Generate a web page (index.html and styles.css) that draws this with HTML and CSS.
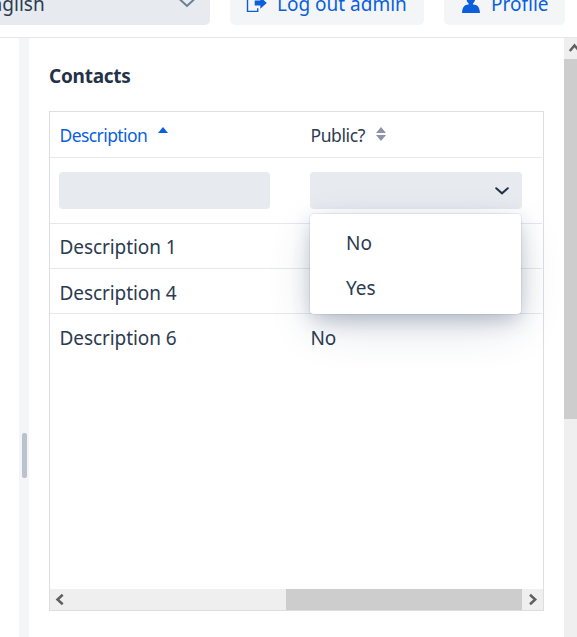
FILE: index.html
```html
<!DOCTYPE html>
<html lang="en">
<head>
<meta charset="utf-8">
<title>Contacts</title>
<link rel="stylesheet" href="styles.css">
</head>
<body>
<header class="toolbar">
  <div class="language"><span class="language-text">English</span>
    <svg class="language-arrow" width="16" height="10" viewBox="0 0 16 10"><path d="M1 1.5 8 8 15 1.5" fill="none" stroke="#6b7f96" stroke-width="2"/></svg>
  </div>
  <button class="button logout">
    <svg width="21" height="20" viewBox="0 0 21 20"><path d="M11.500 1.500H1.500V17.400H11.700V14.200" fill="none" stroke="#0b5fdc" stroke-width="1.400"/><path d="M8.700 6.500H14.300V3L20.800 9 14.300 14.800V11.500H8.700Z" fill="#0b5fdc"/></svg>
    <span class="button-text">Log out admin</span>
  </button>
  <button class="button profile">
    <svg width="20" height="20" viewBox="0 0 20 20"><path d="M6.300 4a4.500 4.500 0 0 1 9 0c0 2-.8 4.200-2.300 5.600V10.600C17.500 11 19.500 12.500 20 19H2c.5-6.500 2.500-8 6.600-8.400V9.600C7.100 8.200 6.300 6 6.300 4Z" fill="#0b5fdc"/></svg>
    <span class="button-text">Profile</span>
  </button>
</header>
<div class="workspace">
  <div class="side"></div>
  <div class="splitter"><div class="handle"></div></div>
  <main class="content">
    <h1 class="title">Contacts</h1>
    <section class="grid">
      <div class="row head">
        <div class="cell sorted"><span class="label-description">Description</span>
          <svg class="sort-asc" width="10" height="6" viewBox="0 0 10 6"><path d="M0 6 5 0 10 6Z" fill="#0b5fdc"/></svg>
        </div>
        <div class="cell"><span class="label-public">Public?</span>
          <svg class="sort-none" width="10" height="14" viewBox="0 0 10 14"><path d="M0 6 5 0 10 6ZM0 8H10L5 14Z" fill="#8b95a7"/></svg>
        </div>
      </div>
      <div class="row filters">
        <div class="cell"><div class="field"></div></div>
        <div class="cell">
          <div class="field combo">
            <svg width="14" height="8" viewBox="0 0 14 8"><path d="M1.200 1.200 7 6.300 12.800 1.200" fill="none" stroke="#243247" stroke-width="2" stroke-linecap="round"/></svg>
            <div class="menu">
              <div class="option">No</div>
              <div class="option">Yes</div>
            </div>
          </div>
        </div>
      </div>
      <div class="row item"><div class="cell">Description 1</div><div class="cell"></div></div>
      <div class="row item middle"><div class="cell">Description 4</div><div class="cell"></div></div>
      <div class="row item last"><div class="cell">Description 6</div><div class="cell">No</div></div>
      <div class="hscroll">
        <svg width="20" height="21" viewBox="0 0 20 21"><path d="M12.700 5.800 7.500 10.500 12.700 15.200" fill="none" stroke="#606060" stroke-width="2.500"/></svg>
        <div class="hthumb"></div>
        <svg width="21" height="21" viewBox="0 0 21 21"><path d="M8 5.800 13.200 10.500 8 15.200" fill="none" stroke="#606060" stroke-width="2.500"/></svg>
      </div>
    </section>
  </main>
  <div class="vscroll">
    <svg width="21" height="21" viewBox="0 0 21 21"><path d="M5.800 13 10.500 7.500 15.200 13" fill="none" stroke="#606060" stroke-width="2.500"/></svg>
    <div class="vthumb"></div>
  </div>
</div>
</body>
</html>
```
FILE: styles.css
```css
* { box-sizing: border-box; }

body {
  margin: 0;
  width: 577px;
  height: 637px;
  display: flex;
  flex-direction: column;
  overflow: hidden;
  background: #fff;
  color: #2c3b50;
  font: 19px/28px "Noto Sans", "Open Sans", sans-serif;
}

svg { display: block; flex: none; }

.toolbar {
  flex: none;
  height: 38px;
  padding-bottom: 12px;
  display: flex;
  align-items: flex-end;
  gap: 20px;
  overflow: hidden;
  border-bottom: 1px solid #e4e6e9;
}

.language {
  flex: none;
  width: 230px;
  margin-left: -20px;
  height: 45px;
  padding-right: 15px;
  display: flex;
  align-items: center;
  justify-content: space-between;
  border-radius: 5px;
  background: #e7eaef;
}

.language-text { margin: 2px 0 0 0; }
.language-arrow { margin-top: 1px; }

.button {
  flex: none;
  height: 45px;
  padding: 0 0 0 16px;
  display: flex;
  align-items: center;
  border: 0;
  border-radius: 5px;
  background: #f3f5f7;
  color: #0b5fdc;
  font: inherit;
  white-space: nowrap;
}

.button svg { margin-top: 3px; }
.button-text { margin: 2px 0 0 11px; }
.logout { width: 194px; }
.logout .button-text { margin-left: 10px; }
.profile { width: 121px; }

.workspace { flex: 1; display: flex; min-height: 0; }
.side { flex: none; width: 19px; }

.splitter {
  flex: none;
  width: 10px;
  padding: 395px 0 0 3px;
  background: #f3f5f7;
}

.handle { width: 5px; height: 45px; border-radius: 2px; background: #bac2cd; }

.content {
  flex: 1;
  min-width: 0;
  padding: 24px 20px 26px;
  display: flex;
  flex-direction: column;
}

.title {
  margin: 0 0 21px;
  font-size: 19px;
  line-height: 28px;
  font-weight: 700;
  letter-spacing: -0.25px;
  color: #243247;
}

.grid {
  flex: 1;
  display: flex;
  flex-direction: column;
  border: 1px solid #dcdee1;
}

.row {
  flex: none;
  height: 45px;
  margin-right: 1px;
  display: grid;
  grid-template-columns: 251px 1fr;
  border-bottom: 1px solid #e7e8ea;
}

.cell { padding-left: 9px; display: flex; align-items: center; white-space: nowrap; }
.item { padding-top: 2px; }
.item .cell { padding-left: 9.5px; letter-spacing: -0.08px; }
.middle { padding-top: 4px; }
.head { height: 46px; padding-top: 1px; font-size: 17.5px; }
.head .cell { padding-left: 9.5px; }
.sorted { color: #0b5fdc; }
.label-description { width: 87.5px; letter-spacing: -0.58px; }
.label-public { width: 55px; letter-spacing: -0.4px; }
.sort-asc { margin: 0 0 11px 10.5px; }
.sort-none { margin: 0 0 3px 10.5px; }
.filters { height: 66px; }
.last { border-bottom: 0; }

.field { width: 211px; height: 37px; border-radius: 4px; background: #e7eaef; }

.combo {
  position: relative;
  width: 212px;
  padding-right: 13px;
  display: flex;
  align-items: center;
  justify-content: flex-end;
}

.menu {
  position: absolute;
  top: 42px;
  left: 0;
  width: 211px;
  height: 100px;
  padding: 6px 0 4px;
  border-radius: 4px;
  background: #fff;
  box-shadow: 0 0 0 1px rgba(36, 60, 97, .08), 0 7px 20px -2px rgba(36, 60, 97, .28), 0 15px 48px -6px rgba(36, 60, 97, .2);
}

.option { height: 45px; padding-left: 36px; line-height: 46px; }

.hscroll { height: 21px; margin-top: auto; display: flex; justify-content: space-between; background: #efefef; }
.hthumb { width: 236px; margin-left: auto; background: #cdcdcd; }
.vscroll { flex: none; width: 13px; overflow: hidden; background: #efefef; }
.vthumb { height: 360px; background: #cdcdcd; }
```
